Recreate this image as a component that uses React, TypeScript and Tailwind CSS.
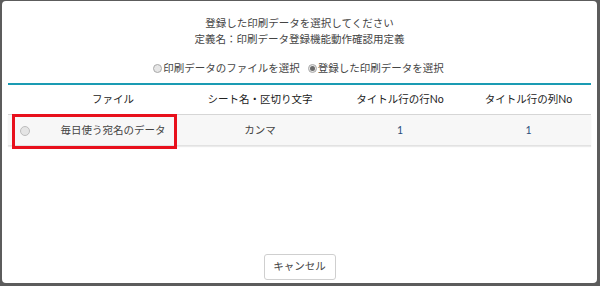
const font = { fontFamily: '"Lato", "Noto Sans CJK JP", sans-serif' };

function Radio({ checked = false }: { checked?: boolean }) {
  return (
    <span className="inline-flex w-[9px] h-[9px] rounded-full border border-[#a9a9a9] bg-[#e6e6e6] items-center justify-center mr-px">
      {checked && <span className="w-[5px] h-[5px] rounded-full bg-[#6b6b6b]" />}
    </span>
  );
}

export default function App() {
  return (
    <div className="w-[600px] h-[286px] bg-[#5c5c5c] pt-px pl-[2px] pr-[3px] pb-[3px]" style={font}>
      <div className="h-full bg-white rounded-[4px] flex flex-col text-[#444]">
        <div className="pt-[14px] text-center text-[10.5px] leading-[16px]">
          <p>登録した印刷データを選択してください</p>
          <p>定義名：印刷データ登録機能動作確認用定義</p>
        </div>

        <div className="mt-[14px] flex justify-center items-center gap-[8px] text-[10.5px] leading-[14px] pl-[2px] pr-[4px]">
          <label className="flex items-center">
            <Radio />
            印刷データのファイルを選択
          </label>
          <label className="flex items-center">
            <Radio checked />
            登録した印刷データを選択
          </label>
        </div>

        <div className="mx-[6px] mt-[8px] border-t-2 border-[#1a9bb3]">
          <div className="flex h-[30px] items-center border-b border-[#d6d6d6] text-[10.5px] text-[#222]">
            <div className="w-[32px]" />
            <div className="w-[146px] text-center">ファイル</div>
            <div className="w-[148px] text-center">シート名・区切り文字</div>
            <div className="w-[132px] text-center">タイトル行の行No</div>
            <div className="flex-1 text-center">タイトル行の列No</div>
          </div>
          <div className="relative flex h-[31px] items-center bg-[#f7f7f7] border-b border-[#e2e2e2] shadow-[0_1px_1px_rgba(0,0,0,0.08)] text-[10.5px] pt-px">
            <div className="w-[32px] flex justify-center pl-[1px]">
              <span className="w-[10px] h-[10px] rounded-full border border-[#bdbdbd] bg-[#e4e4e4]" />
            </div>
            <div className="w-[146px] text-center">毎日使う宛名のデータ</div>
            <div className="w-[148px] text-center">カンマ</div>
            <div className="w-[132px] text-center text-[#2a4d7a]">1</div>
            <div className="flex-1 text-center text-[#2a4d7a]">1</div>
            <div className="absolute left-[4px] top-[-1px] w-[165px] h-[35px] border-[3px] border-[#e8101c]" />
          </div>
        </div>

        <div className="flex-1" />
        <div className="flex justify-center pb-[3px]">
          <button className="w-[72px] h-[26px] border border-[#cfcfcf] rounded-[3px] bg-white text-[10.5px] text-[#444]">
            キャンセル
          </button>
        </div>
      </div>
    </div>
  );
}
